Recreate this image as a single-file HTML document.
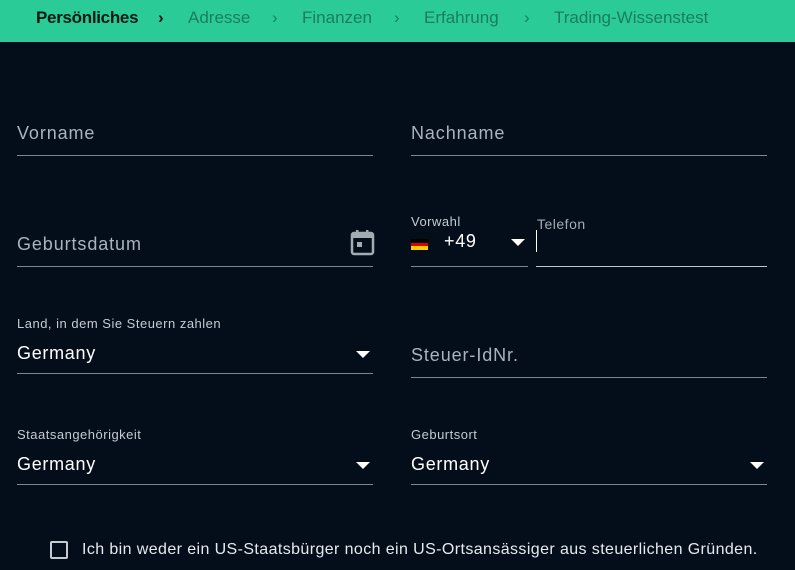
<!DOCTYPE html>
<html><head><meta charset="utf-8"><style>
*{margin:0;padding:0;box-sizing:border-box}
body{width:795px;height:570px;background:#040e1b;font-family:"Liberation Sans",sans-serif;position:relative;overflow:hidden;color:#fff}
.hdr{position:absolute;left:0;top:0;width:795px;height:42px;background:#2bcb97}
.hdr span{position:absolute;top:8px;font-size:17px;color:#1b7d5c}
.t{position:absolute;white-space:nowrap}
.lbl{font-size:18px;color:#aab3bd;letter-spacing:0.9px}
.small{font-size:13px;color:#c4cbd2;letter-spacing:0.5px}
.val{font-size:18px;color:#fff;letter-spacing:0.7px}
.line{position:absolute;height:1px;background:#7e858d}
.tri{position:absolute;width:0;height:0;border-left:7px solid transparent;border-right:7px solid transparent;border-top:7px solid #fff}
</style></head><body>
<div class="hdr">
<span style="left:36px;color:#061a14;font-weight:bold;letter-spacing:-0.3px">Persönliches</span>
<span style="left:158px;color:#061a14;font-weight:bold">›</span>
<span style="left:188px">Adresse</span>
<span style="left:272px">›</span>
<span style="left:302px">Finanzen</span>
<span style="left:394px">›</span>
<span style="left:424px">Erfahrung</span>
<span style="left:524px">›</span>
<span style="left:554px">Trading-Wissenstest</span>
</div>
<div class="t lbl" style="left:17px;top:123px">Vorname</div><div class="line" style="left:17px;top:155px;width:356px"></div>
<div class="t lbl" style="left:411px;top:123px">Nachname</div><div class="line" style="left:411px;top:155px;width:356px"></div>
<div class="t lbl" style="left:17px;top:234px">Geburtsdatum</div><div class="line" style="left:17px;top:266px;width:356px"></div>
<svg style="position:absolute;left:350px;top:229px" width="26" height="28" viewBox="0 0 26 28"><rect x="2" y="4" width="21" height="21" rx="2" fill="none" stroke="#a3abb3" stroke-width="2.5"/><rect x="2" y="4" width="21" height="5" fill="#a3abb3"/><rect x="6" y="1" width="2.5" height="5" fill="#a3abb3"/><rect x="16" y="1" width="2.5" height="5" fill="#a3abb3"/><rect x="7" y="13" width="5" height="5" fill="#a3abb3"/></svg>
<div class="t small" style="left:411px;top:214px">Vorwahl</div>
<div style="position:absolute;left:411px;top:239px;width:17px;height:4px;background:#000"></div>
<div style="position:absolute;left:411px;top:243px;width:17px;height:3px;background:#dd0000"></div>
<div style="position:absolute;left:411px;top:246px;width:17px;height:4px;background:#ffce00"></div>
<div class="t val" style="left:444px;top:231px">+49</div>
<div class="tri" style="left:511px;top:239px"></div>
<div class="line" style="left:411px;top:266px;width:117px"></div>
<div class="t small" style="left:537px;top:216px;font-size:14px;color:#a3abb3">Telefon</div>
<div style="position:absolute;left:536px;top:230px;width:1px;height:22px;background:#fff"></div>
<div class="line" style="left:536px;top:266px;width:231px;background:#c0c6cc"></div>
<div class="t small" style="left:17px;top:316px">Land, in dem Sie Steuern zahlen</div>
<div class="t val" style="left:17px;top:343px">Germany</div>
<div class="tri" style="left:356px;top:351px"></div>
<div class="line" style="left:17px;top:373px;width:356px"></div>
<div class="t lbl" style="left:411px;top:345px">Steuer-IdNr.</div><div class="line" style="left:411px;top:377px;width:356px"></div>
<div class="t small" style="left:17px;top:427px">Staatsangehörigkeit</div>
<div class="t val" style="left:17px;top:454px">Germany</div>
<div class="tri" style="left:356px;top:462px"></div>
<div class="line" style="left:17px;top:484px;width:356px"></div>
<div class="t small" style="left:411px;top:427px">Geburtsort</div>
<div class="t val" style="left:411px;top:454px">Germany</div>
<div class="tri" style="left:750px;top:462px"></div>
<div class="line" style="left:411px;top:484px;width:356px"></div>
<div style="position:absolute;left:50px;top:541px;width:18px;height:18px;border:2px solid #c4cbd2;border-radius:2px"></div>
<div class="t" style="left:82px;top:541px;font-size:16px;color:#e6eaee;letter-spacing:0.4px">Ich bin weder ein US-Staatsbürger noch ein US-Ortsansässiger aus steuerlichen Gründen.</div>
</body></html>
